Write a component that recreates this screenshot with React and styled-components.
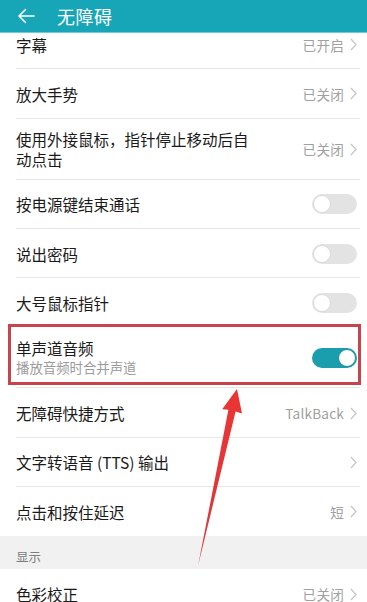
import React from "react"
import styled, { createGlobalStyle } from "styled-components"

const GlobalStyle = createGlobalStyle`
  html, body {
    margin: 0;
    padding: 0;
    background: #ffffff;
  }
  body {
    font-family: "Noto Sans CJK SC", "Noto Sans", "Liberation Sans", sans-serif;
    -webkit-font-smoothing: antialiased;
  }
`

const Screen = styled.div`
  position: relative;
  width: 367px;
  height: 602px;
  overflow: hidden;
  display: flex;
  flex-direction: column;
  background: #ffffff;
`

const Header = styled.header`
  position: relative;
  z-index: 2;
  flex: 0 0 32px;
  display: flex;
  align-items: center;
  gap: 22px;
  padding-left: 17px;
  background: #17a6b8;
  box-shadow: 0 1px 0 #6fcbd6;
`

const HeaderTitle = styled.h1`
  margin: 0;
  font-size: 18px;
  font-weight: 400;
  color: #ffffff;
  letter-spacing: 0.5px;
  line-height: 1;
`

const Viewport = styled.main`
  flex: 1;
  overflow: hidden;
`

const List = styled.div`
  margin-top: -12px;
  display: flex;
  flex-direction: column;
`

const Row = styled.div`
  position: relative;
  box-sizing: border-box;
  height: ${({ $tall }) => ($tall ? "61px" : "49.3px")};
  display: flex;
  align-items: center;
  gap: 10px;
  padding: 0 10px 0 16px;

  &::after {
    content: "";
    position: absolute;
    left: 16px;
    right: 7px;
    bottom: 0;
    height: 1px;
    background: ${({ $noLine }) => ($noLine ? "transparent" : "#e6e6e6")};
  }
`

const TextBlock = styled.div`
  flex: 1;
  display: flex;
  flex-direction: column;
  min-width: 0;
`

const Title = styled.div`
  font-size: 15.5px;
  line-height: 20px;
  color: #1a1a1a;
`

const Subtitle = styled.div`
  font-size: 13.4px;
  line-height: 19px;
  color: #9b9b9b;
`

const Value = styled.div`
  display: flex;
  align-items: center;
  gap: 6px;
  font-size: 13.6px;
  color: #a0a0a0;
  letter-spacing: 0.2px;
`

const Track = styled.div`
  position: relative;
  box-sizing: border-box;
  width: 45px;
  height: 20px;
  border-radius: 10px;
  background: ${({ $on }) => ($on ? "#1a9dac" : "#e3e3e3")};
  display: flex;
  align-items: center;
  justify-content: ${({ $on }) => ($on ? "flex-end" : "flex-start")};
  padding: 1px;
`

const Knob = styled.div`
  box-sizing: border-box;
  width: 18px;
  height: 18px;
  border-radius: 50%;
  background: #ffffff;
  border: 1px solid ${({ $on }) => ($on ? "#1a8f9d" : "#dadada")};
`

const Highlight = styled.div`
  position: absolute;
  z-index: 1;
  left: 8px;
  right: 6px;
  top: -3px;
  bottom: 3px;
  border: 3px solid #c8434c;
  pointer-events: none;
`

const Section = styled.div`
  box-sizing: border-box;
  height: 33px;
  padding: 11px 16px 0;
  background: #f1f1f1;
  font-size: 12.5px;
  color: #7d7d7d;
`

const Pointer = styled.svg`
  position: absolute;
  z-index: 3;
  left: 0;
  top: 0;
  pointer-events: none;
`

function BackArrow() {
  return (
    <svg width="18" height="16" viewBox="0 0 18 16">
      <path
        d="M17 8H2M8.5 1.5L2 8l6.5 6.5"
        fill="none"
        stroke="#ffffff"
        strokeWidth="1.6"
        strokeLinecap="round"
        strokeLinejoin="round"
      />
    </svg>
  )
}

function Chevron() {
  return (
    <svg width="7" height="13" viewBox="0 0 7 13">
      <path d="M1 1l5 5.5L1 12" fill="none" stroke="#c6c6c6" strokeWidth="1.3" />
    </svg>
  )
}

function Toggle({ on }) {
  return (
    <Track $on={on}>
      <Knob $on={on} />
    </Track>
  )
}

const rows = [
  { title: "字幕", value: "已开启" },
  { title: "放大手势", value: "已关闭" },
  { title: ["使用外接鼠标，指针停止移动后自", "动点击"], value: "已关闭", tall: true },
  { title: "按电源键结束通话", toggle: false },
  { title: "说出密码", toggle: false },
  { title: "大号鼠标指针", toggle: false },
  { title: "单声道音频", sub: "播放音频时合并声道", toggle: true, tall: true, marked: true },
  { title: "无障碍快捷方式", value: "TalkBack" },
  { title: "文字转语音 (TTS) 输出", value: "" },
  { title: "点击和按住延迟", value: "短", noLine: true },
]

function SettingRow({ row }) {
  const lines = Array.isArray(row.title) ? row.title : [row.title]
  return (
    <Row $tall={row.tall} $noLine={row.noLine}>
      <TextBlock>
        {lines.map((l) => (
          <Title key={l}>{l}</Title>
        ))}
        {row.sub && <Subtitle>{row.sub}</Subtitle>}
      </TextBlock>
      {row.toggle !== undefined ? (
        <Toggle on={row.toggle} />
      ) : (
        <Value>
          {row.value}
          <Chevron />
        </Value>
      )}
      {row.marked && <Highlight />}
    </Row>
  )
}

export default function App() {
  return (
    <Screen>
      <GlobalStyle />
      <Header>
        <BackArrow />
        <HeaderTitle>无障碍</HeaderTitle>
      </Header>
      <Viewport>
        <List>
          {rows.map((r, i) => (
            <SettingRow key={i} row={r} />
          ))}
          <Section>显示</Section>
          <SettingRow row={{ title: "色彩校正", value: "已关闭" }} />
        </List>
      </Viewport>
      <Pointer width="367" height="602" viewBox="0 0 367 602">
        <defs>
          <linearGradient id="arrowFill" x1="0" y1="0" x2="0" y2="1">
            <stop offset="0" stopColor="#ec3434" />
            <stop offset="1" stopColor="#d8393c" />
          </linearGradient>
        </defs>
        <polygon
          points="237,389 242,413.6 235.6,411.5 198,566 228.4,409.8 222.2,409.2"
          fill="url(#arrowFill)"
        />
      </Pointer>
    </Screen>
  )
}
